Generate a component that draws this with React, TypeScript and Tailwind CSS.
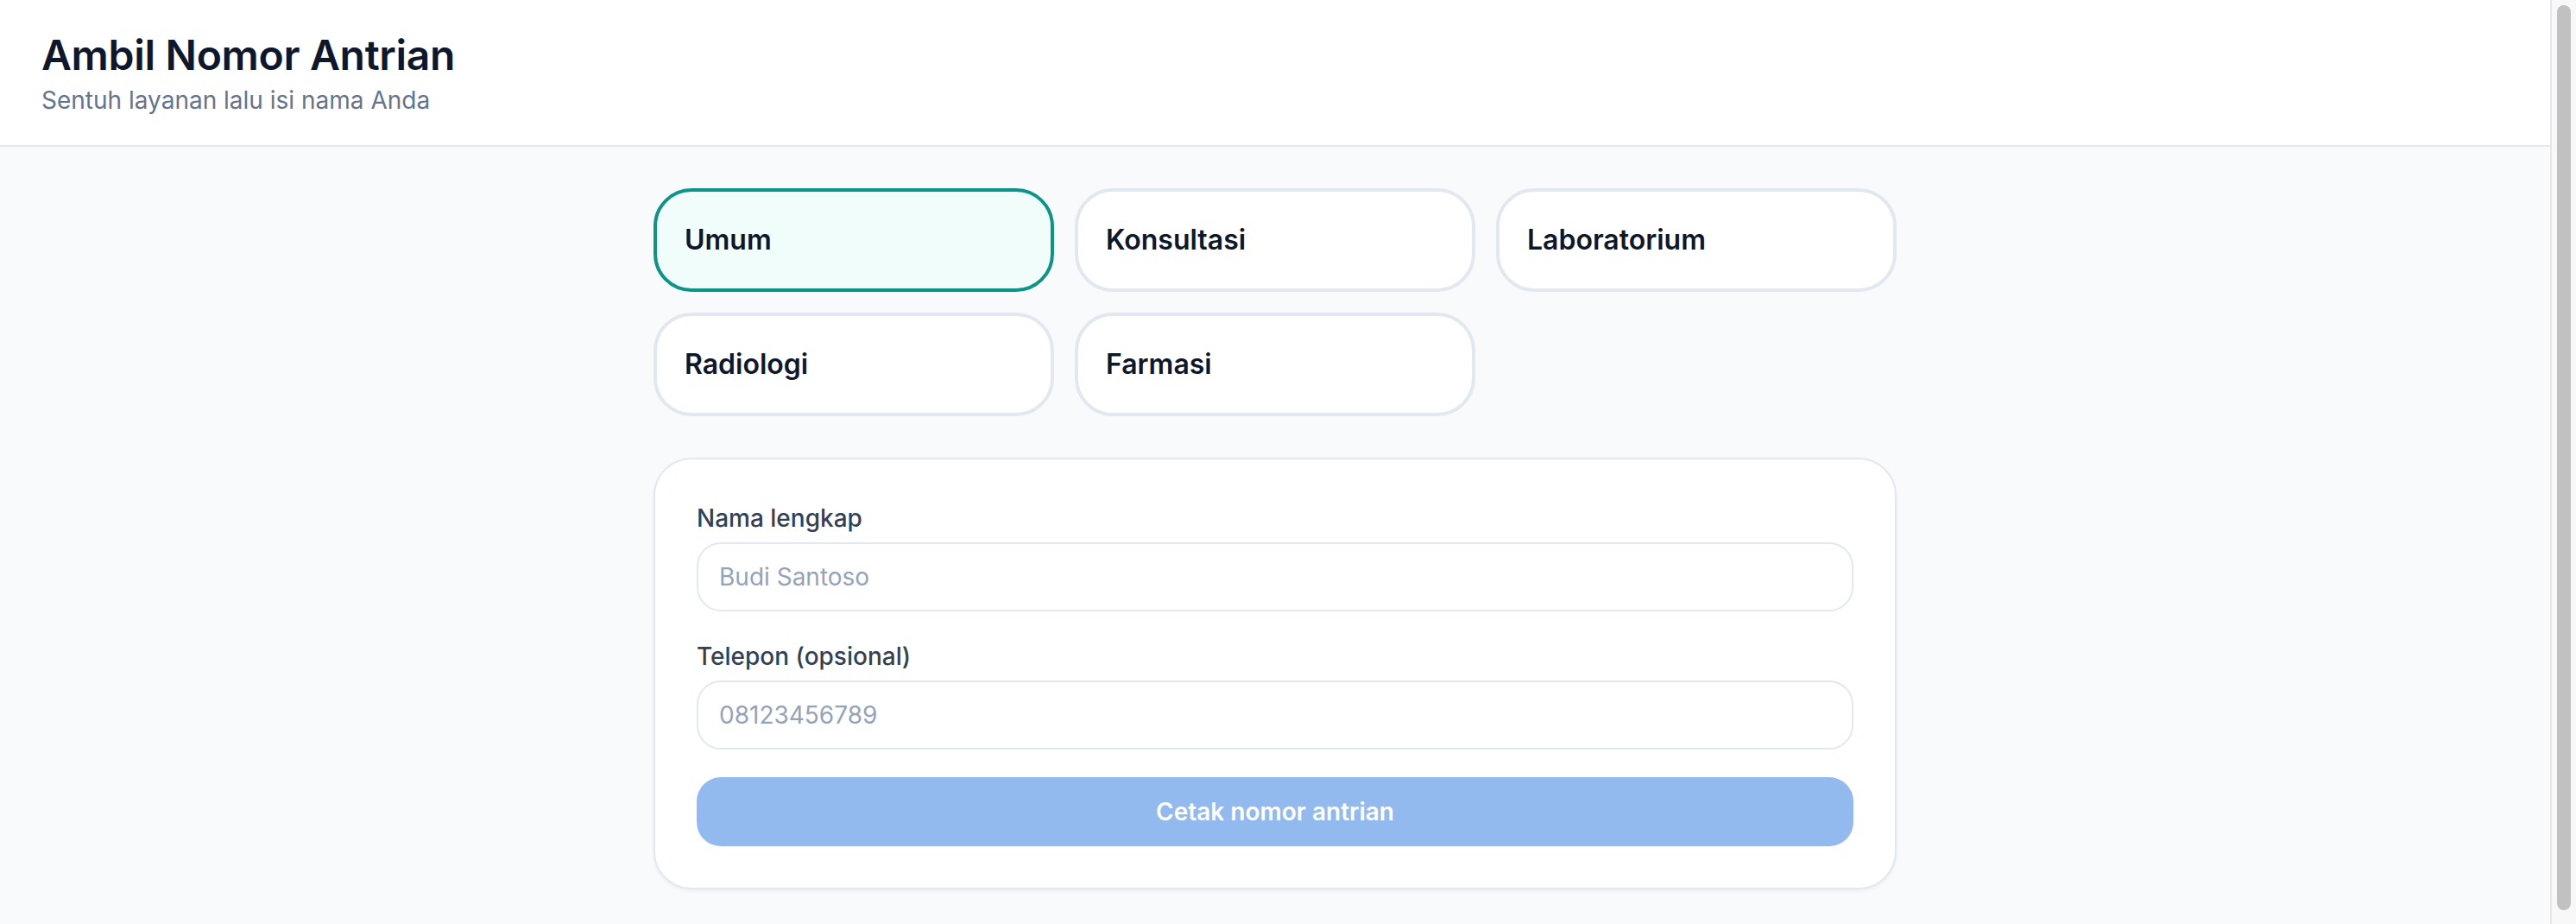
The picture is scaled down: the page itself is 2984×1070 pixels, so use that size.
import React from "react";

const services = ["Umum", "Konsultasi", "Laboratorium", "Radiologi", "Farmasi"];

export default function App() {
  const selected = "Umum";
  return (
    <div className="flex h-[1070px] w-full overflow-hidden font-['Inter','Noto_Sans',sans-serif]">
      <div className="flex-1 min-w-0 h-full bg-[#f8fafc]">
        <header className="bg-white border-b-2 border-[#e2e8f0] px-[48px] py-[32px]">
          <h1 className="text-[48px] leading-[64px] font-semibold text-[#0f172a] tracking-[-0.3px]">
            Ambil Nomor Antrian
          </h1>
          <p className="text-[28px] leading-[40px] text-[#64748b]">Sentuh layanan lalu isi nama Anda</p>
        </header>
        <main className="mx-auto max-w-[1536px] px-[48px] py-[48px] flex flex-col gap-[48px]">
          <div className="grid grid-cols-3 gap-[24px]">
            {services.map((s) => {
              const active = s === selected;
              return (
                <button
                  key={s}
                  className={
                    active
                      ? "text-left rounded-[44px] border-[4px] border-[#0d9488] bg-[#f0fdfa] px-[32px] py-[32px] text-[32px] leading-[48px] font-semibold text-[#0f172a]"
                      : "text-left rounded-[44px] border-[4px] border-[#e2e8f0] bg-white px-[32px] py-[32px] text-[32px] leading-[48px] font-semibold text-[#0f172a]"
                  }
                >
                  {s}
                </button>
              );
            })}
          </div>
          <div className="bg-white border-2 border-[#e2e8f0] rounded-[44px] p-[48px] shadow-[0_2px_4px_rgba(15,23,42,0.05)] flex flex-col gap-[32px]">
            <div>
              <label className="block text-[28px] leading-[40px] font-medium text-[#334155] mb-[8px]">Nama lengkap</label>
              <input
                className="block w-full h-[80px] border-2 border-[#e2e8f0] rounded-[28px] px-[24px] text-[28px] text-[#0f172a] placeholder:text-[#94a3b8] outline-none bg-white"
                placeholder="Budi Santoso"
              />
            </div>
            <div>
              <label className="block text-[28px] leading-[40px] font-medium text-[#334155] mb-[8px]">Telepon (opsional)</label>
              <input
                className="block w-full h-[80px] border-2 border-[#e2e8f0] rounded-[28px] px-[24px] text-[28px] text-[#0f172a] placeholder:text-[#94a3b8] outline-none bg-white"
                placeholder="08123456789"
              />
            </div>
            <button className="w-full h-[80px] rounded-[28px] bg-[#93baee] text-white font-semibold text-[28px]">
              Cetak nomor antrian
            </button>
          </div>
        </main>
      </div>
      <div className="w-[30px] h-full shrink-0 bg-[#f8f8f8] border-l-2 border-[#e5e7eb] flex justify-center pt-[6px] pb-[16px]">
        <div className="w-[16px] h-full rounded-full bg-[#c1c1c1]" />
      </div>
    </div>
  );
}
